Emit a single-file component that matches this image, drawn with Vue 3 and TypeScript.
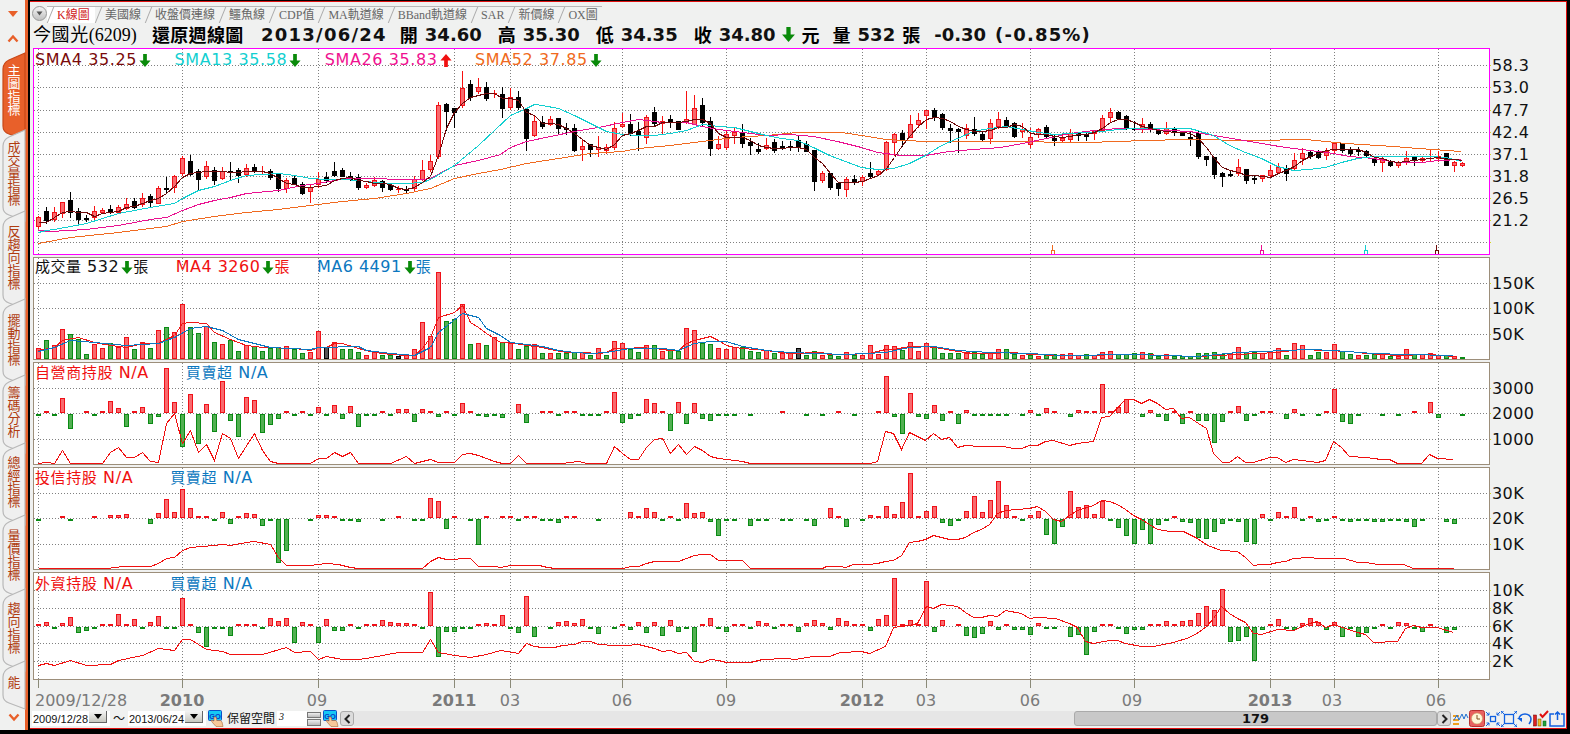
<script setup lang="ts">
type Bar = { x: number; y: number; c: string }

// y values below are page coordinates, each panel's viewBox starts at its own top
const gridX = [38, 182, 318, 454, 510, 622, 726, 862, 926, 1030, 1134, 1270, 1334, 1438]

const candles: number[][] = [
  [216,217,226,228,1],[207,211,220,223,0],[207,212,219,221,1],[202,202,213,217,1],[192,200,212,217,0],[208,211,219,225,0],[215,218,219,221,0],[206,211,217,219,1],
  [208,210,212,213,1],[205,209,212,213,0],[205,207,212,213,1],[198,204,208,209,1],[198,201,207,208,0],[193,198,204,206,1],[194,196,202,206,0],[186,188,203,203,1],
  [177,188,189,192,0],[175,176,187,192,1],[156,158,173,175,1],[155,161,174,175,0],[169,171,179,189,0],[161,166,176,178,1],[167,170,180,184,0],[167,171,178,179,1],
  [162,171,172,180,0],[168,170,175,182,0],[164,168,174,176,1],[164,167,171,172,0],[166,171,172,173,1],[169,171,177,179,0],[173,174,188,191,0],[178,180,188,192,1],
  [176,178,184,184,0],[182,184,193,194,0],[185,187,191,202,1],[172,179,184,187,1],[172,177,180,182,0],[162,171,175,176,0],[168,170,176,176,0],[172,176,179,180,0],
  [174,177,187,189,0],[183,185,187,188,1],[177,180,185,186,1],[180,181,187,191,0],[184,185,189,190,0],[186,189,190,192,1],[186,189,190,193,0],[176,179,188,190,1],
  [160,170,179,180,1],[155,161,169,171,1],[102,105,156,158,1],[103,104,111,130,0],[108,108,112,127,0],[71,88,105,107,1],[80,84,97,100,0],[78,87,91,93,1],
  [82,87,98,100,0],[90,93,94,97,1],[87,94,108,117,0],[88,97,107,109,1],[91,97,107,109,0],[109,109,138,150,0],[116,121,135,136,1],[116,122,126,128,0],
  [116,119,124,125,1],[118,118,128,133,0],[123,128,129,134,0],[124,128,150,151,0],[140,146,149,160,1],[144,144,149,156,0],[136,147,149,156,1],[144,147,150,153,1],
  [122,128,147,149,1],[113,124,126,127,1],[114,124,133,135,0],[122,131,135,150,0],[115,117,137,143,1],[107,112,123,125,0],[116,121,123,133,1],[115,119,122,127,0],
  [121,121,129,129,0],[91,119,121,123,1],[95,108,124,124,1],[98,105,122,125,0],[117,121,148,155,0],[136,144,148,149,1],[130,134,147,149,1],[128,132,135,143,1],
  [124,132,143,147,0],[138,142,145,154,0],[143,149,151,153,0],[138,145,148,149,1],[139,142,150,152,0],[141,146,148,149,0],[141,146,147,150,0],[135,140,147,151,0],
  [141,144,151,151,0],[150,150,181,190,0],[171,173,180,182,1],[173,173,187,189,0],[182,183,188,195,0],[177,179,189,196,1],[175,179,182,184,0],[175,177,181,185,1],
  [162,173,176,177,0],[170,171,174,175,1],[141,142,169,170,1],[133,134,142,155,1],[130,133,140,146,0],[115,124,137,137,1],[113,120,124,127,1],[110,110,115,128,1],
  [108,110,116,120,0],[113,114,127,129,0],[124,128,130,142,0],[128,129,131,152,0],[124,128,135,138,1],[117,129,133,135,0],[131,134,139,141,0],[119,123,138,143,1],
  [112,119,126,128,1],[117,120,125,126,0],[122,123,136,137,0],[123,129,131,137,1],[128,137,144,147,1],[128,129,134,137,1],[125,127,136,137,0],[134,138,140,145,0],
  [133,138,140,142,1],[129,133,139,142,1],[133,133,135,140,0],[132,134,136,140,0],[130,131,133,139,1],[115,118,130,131,1],[108,112,117,121,1],[111,112,118,118,0],
  [115,116,128,129,0],[121,128,129,130,0],[118,124,129,132,1],[122,124,129,131,0],[129,130,133,134,0],[122,128,133,134,1],[127,128,132,135,0],[131,132,135,135,0],
  [131,137,139,145,0],[131,133,156,158,0],[156,156,159,165,0],[157,157,174,178,0],[172,173,176,186,0],[171,174,175,176,0],[159,167,173,175,1],[169,169,180,183,0],
  [176,178,179,183,0],[175,175,178,181,1],[165,170,175,177,1],[163,167,172,173,1],[165,168,173,180,0],[153,160,168,170,1],[148,153,158,164,1],[150,152,156,158,0],
  [150,151,157,158,0],[148,151,155,159,1],[142,143,150,153,1],[143,143,150,152,0],[147,149,153,156,0],[147,150,151,155,0],[150,151,155,157,0],[157,158,162,165,0],
  [157,159,162,171,1],[160,161,165,166,0],[161,162,165,167,1],[151,158,162,164,1],[157,157,159,165,0],[157,158,160,161,1],[149,158,159,160,1],[151,156,158,161,1],
  [153,153,165,165,0],[161,162,165,171,1],[162,163,165,166,1],
]

const ma4 = `38,222 46,222 54,217 62,212 70,211 78,212 86,212 94,216 102,213 110,212 118,211 126,207 134,206 142,203 150,200 158,198 166,193 174,186 182,177 190,173 198,172 206,171 214,171 222,171 230,172 238,172 246,171 254,171 262,171 270,173 278,178 286,183 294,184 302,187 310,187 318,186 326,185 334,180 342,178 350,177 358,180 366,181 374,183 382,183 390,184 398,188 406,189 414,187 422,182 430,176 438,155 446,128 454,112 462,103 470,97 478,95 486,93 494,93 502,98 510,98 518,100 526,112 534,115 542,123 550,123 558,124 566,128 574,133 582,139 590,145 598,147 606,149 614,144 622,135 630,133 638,130 646,126 654,126 662,122 670,122 678,122 686,121 694,119 702,119 710,123 718,133 726,137 734,137 742,137 750,140 758,145 766,147 774,148 782,148 790,147 798,147 806,149 814,157 822,163 830,173 838,182 846,182 854,182 862,181 870,178 878,175 886,168 894,157 902,145 910,135 918,126 926,119 934,117 942,118 950,121 958,126 966,129 974,131 982,131 990,130 998,127 1006,127 1014,124 1022,126 1030,133 1038,134 1046,134 1054,136 1062,137 1070,136 1078,134 1086,134 1094,132 1102,128 1110,122 1118,119 1126,119 1134,122 1142,126 1150,128 1158,130 1166,131 1174,132 1182,132 1190,133 1198,138 1206,147 1214,158 1222,167 1230,170 1238,172 1246,175 1254,175 1262,176 1270,177 1278,173 1286,170 1294,166 1302,160 1310,156 1318,153 1326,150 1334,149 1342,149 1350,149 1358,149 1366,152 1374,157 1382,158 1390,161 1398,162 1406,161 1414,160 1422,159 1430,158 1438,157 1446,159 1454,159 1462,160`
const ma13 = `38,232 46,230 54,229 86,223 118,213 150,207 174,203 182,198 198,190 214,186 230,180 246,175 262,174 278,173 294,175 310,178 326,179 342,179 358,180 374,182 390,183 406,183 422,182 430,179 454,165 478,145 494,130 510,115 526,108 534,104 542,105 558,108 574,115 590,123 606,131 622,134 638,135 654,135 670,133 686,130 702,124 718,126 734,127 750,131 766,135 781,138 797,140 813,147 829,155 845,161 861,167 877,169 893,168 909,163 925,155 941,145 957,138 973,131 989,128 1006,126 1022,129 1038,132 1054,134 1070,133 1086,132 1102,131 1118,129 1134,128 1150,128 1173,128 1189,128 1197,130 1213,135 1229,145 1245,152 1261,158 1277,166 1293,170 1309,169 1325,167 1341,162 1357,158 1374,156 1405,156 1429,156 1446,157 1461,161`
const ma26 = `38,230 50,231 86,229 118,225 150,219 166,217 182,210 198,204 214,200 230,197 246,193 278,190 302,185 318,183 334,180 350,178 374,178 398,179 422,179 430,178 454,165 478,160 500,154 510,147 526,141 550,136 574,131 598,127 622,122 638,119 662,122 686,122 702,126 718,129 742,132 766,135 789,134 813,136 837,141 861,147 877,152 901,155 925,155 949,151 973,149 1000,147 1022,143 1046,138 1070,133 1094,130 1118,128 1150,129 1189,131 1213,135 1237,139 1261,143 1285,147 1309,150 1333,153 1349,156 1373,158 1397,162 1421,162 1438,160 1461,159`
const ma52 = `38,243 70,237 118,232 166,226 182,221 214,216 246,212 278,209 310,205 342,201 374,198 406,193 430,188 454,178 478,173 500,169 526,163 558,158 590,153 622,151 638,148 670,145 702,141 734,137 766,135 797,132 841,132 861,135 885,139 925,141 973,141 1000,141 1087,142 1145,140 1185,139 1255,140 1305,139 1345,143 1393,146 1418,148 1461,151`

const volRed = `38,350 54,347 62,340 78,337 94,342 110,345 126,347 142,343 158,343 166,339 174,335 182,323 190,322 206,323 214,332 230,339 246,345 262,347 294,348 310,350 318,347 326,347 334,343 342,343 358,348 374,352 390,354 406,355 414,355 422,348 430,337 438,317 454,312 462,305 470,322 478,327 486,333 494,338 500,342 510,342 526,345 542,347 550,349 566,352 582,352 598,353 606,352 614,348 630,348 638,347 654,348 670,350 678,350 686,343 694,340 702,338 710,336 718,340 726,345 734,347 742,348 766,350 789,353 821,352 829,354 845,354 869,353 885,349 893,349 909,346 925,346 941,348 957,351 973,353 989,353 1013,352 1029,354 1061,355 1093,355 1117,354 1141,354 1165,355 1197,356 1237,354 1277,352 1301,349 1325,350 1349,351 1365,353 1397,355 1429,354 1453,356`
const volBlue = `38,351 54,347 70,340 94,342 126,345 158,343 174,337 190,328 206,326 222,330 238,339 254,343 270,347 310,349 318,347 358,346 366,350 390,353 414,355 430,347 438,332 462,313 478,317 486,328 500,335 510,342 526,344 542,346 558,350 574,352 590,353 606,352 630,348 662,348 678,350 694,343 710,341 726,341 742,346 766,350 789,352 845,354 885,352 909,347 933,346 957,350 989,352 1029,353 1061,355 1133,354 1197,356 1237,352 1309,349 1333,350 1373,353 1405,354 1453,355`

const volBars = `38r348 46g340 54r345 62r329 70g334 78g339 86g354 94r344 102r348 110g343 118r347 126r337 134g349 142r342 150g348 158r330 166g327 174r332 182r304 190g327 198g333 206r326 214g342 222r344 230g340 238g351 246r345 254g346 262g351 270g348 278g347 286r346 294g349 302g353 310r352 318r331 326k347 334r342 342g349 350g349 358g352 366r355 374r352 382g355 390g355 398k356 406r355 414r349 422r322 430r336 438r272 446g321 454g319 462r304 470g344 478r343 486g345 494r337 502g342 510r343 518g349 526g346 534r344 542g353 550r353 558g353 566g353 574g352 582r352 590g355 598r348 606g355 614r341 622r343 630g349 638g352 646r345 654g345 662r351 670g350 678g351 686r328 694r330 702g343 710g344 718r348 726r349 734r347 742g347 750g351 758g352 766r350 774g353 782r353 790r353 798k348 806g355 814g351 822r355 830g355 838g356 846r352 854g355 862r355 870r345 878r354 886r345 894r346 902g350 910r342 918r351 926r343 934g346 942g353 950g353 958g353 966r353 974g352 982g354 990r353 998r349 1006g349 1014g354 1022r355 1030g355 1038r356 1046g355 1054g354 1062r354 1070r353 1078r355 1086g354 1094r355 1102r352 1110r351 1118g354 1126g354 1134g353 1142r352 1150g353 1158g356 1166r354 1174g356 1182g356 1190g356 1198g353 1206g353 1214g352 1222g354 1230r353 1238r347 1246g352 1254g352 1262r353 1270r352 1278r348 1286g355 1294r343 1302r345 1310g355 1318g352 1326r352 1334r344 1342g351 1350g354 1358r355 1366g355 1374g354 1382r354 1390g356 1398r356 1406r349 1414g354 1422r354 1430r353 1438r355 1446g355 1454r356 1462g357`

const dealerBars = `38:416 46:411 54:416 62:398 70:429 86:411 94:416 102:411 110:401 118:408 126:427 134:411 142:407 150:424 158:417 166:368 174:402 182:447 190:394 198:444 206:404 214:432 222:381 230:421 238:437 246:397 254:400 262:433 270:425 278:419 286:411 294:416 302:411 310:416 318:407 326:416 334:405 342:419 350:406 358:427 366:416 374:416 382:411 390:416 398:409 406:409 414:422 422:409 430:411 438:417 446:411 454:416 462:403 470:411 478:416 486:417 494:416 502:418 518:404 526:423 542:411 550:411 558:416 566:411 574:411 582:416 590:416 598:416 606:411 614:392 622:423 630:419 638:416 646:399 654:403 662:411 670:431 678:402 686:424 694:403 702:419 710:421 718:416 726:416 734:416 750:416 782:411 806:416 822:416 838:411 854:416 878:411 886:376 894:417 902:434 910:393 918:417 926:419 934:405 942:421 950:411 958:424 966:410 974:416 982:416 990:416 998:416 1006:416 1014:415 1022:416 1030:410 1038:416 1046:408 1054:411 1062:415 1070:417 1078:410 1086:411 1094:411 1102:384 1110:411 1118:407 1126:399 1134:415 1142:417 1150:410 1158:417 1166:421 1174:411 1182:424 1190:411 1198:421 1206:421 1214:443 1222:422 1230:411 1238:406 1246:421 1254:416 1262:411 1270:411 1286:419 1294:409 1302:416 1318:416 1326:411 1334:389 1342:422 1350:424 1358:416 1366:412 1374:415 1382:416 1390:415 1398:416 1414:411 1430:402 1438:418 1462:416`
const dealerLine = `38,463 46,462 54,463 62,450 70,463 102,463 110,452 118,447 126,457 134,457 142,452 150,461 158,462 166,423 174,413 182,443 190,430 198,452 206,444 214,460 222,433 230,438 238,458 254,433 262,450 270,461 278,463 310,463 318,458 326,458 334,452 342,456 350,452 358,463 390,463 406,456 414,463 430,459 438,462 454,462 462,454 470,453 478,455 494,461 502,463 510,463 518,455 526,463 562,463 570,462 578,461 587,463 606,463 614,446 622,453 630,459 638,459 646,447 654,439 662,438 670,453 678,444 686,454 694,446 702,450 710,456 718,458 726,459 742,461 750,463 870,463 877,461 885,431 893,433 901,449 909,432 925,440 933,433 941,439 949,437 957,447 965,445 979,446 1003,446 1013,448 1021,448 1029,445 1037,445 1045,441 1053,440 1069,445 1077,443 1093,441 1101,417 1109,416 1125,399 1133,399 1141,403 1149,399 1157,403 1165,409 1173,408 1181,418 1189,417 1198,423 1206,428 1213,453 1222,462 1229,462 1237,456 1245,462 1253,462 1269,457 1277,457 1285,462 1293,459 1317,462 1325,460 1333,441 1341,447 1349,456 1365,457 1381,459 1389,459 1397,463 1421,463 1429,454 1437,458 1453,459`

const trustBars = `38:521 62:516 70:521 94:516 110:515 118:515 126:514 150:524 158:513 166:499 174:512 182:489 190:508 198:516 206:516 214:521 222:512 230:524 238:516 246:513 254:514 262:526 270:521 278:563 286:551 310:521 318:515 326:515 334:516 342:521 350:521 358:522 366:520 382:521 390:520 398:516 414:521 422:521 430:498 438:501 446:529 454:516 470:521 478:545 486:516 502:516 510:516 518:521 526:516 534:516 542:521 550:521 558:523 566:516 574:516 598:521 630:512 638:516 646:508 654:512 662:521 670:516 678:521 686:503 694:513 702:512 710:522 718:536 726:521 734:521 750:526 758:521 766:521 782:521 790:521 806:521 814:526 830:508 838:516 846:527 862:521 870:515 878:516 886:506 894:514 902:502 910:473 918:516 926:511 934:506 942:523 950:526 958:521 966:511 974:496 982:512 990:500 998:481 1006:505 1014:516 1022:521 1030:515 1038:511 1046:535 1054:544 1062:527 1070:491 1078:507 1086:505 1094:514 1102:501 1110:521 1118:528 1126:536 1134:544 1142:530 1150:544 1158:525 1166:521 1174:516 1182:522 1190:523 1198:538 1206:539 1214:532 1222:524 1230:521 1238:522 1246:542 1254:544 1262:514 1270:521 1278:512 1286:516 1294:507 1302:521 1310:516 1318:522 1326:521 1334:516 1342:521 1350:522 1358:521 1366:521 1374:522 1382:522 1390:521 1398:521 1406:522 1414:527 1422:521 1446:522 1454:524`
const trustLine = `38,568 106,568 115,567 122,566 150,566 158,563 166,558 174,557 182,550 190,547 214,545 222,544 230,545 246,542 254,541 270,544 278,557 286,565 310,565 318,564 326,563 338,564 350,567 358,568 422,568 430,561 438,557 446,559 470,558 478,566 494,566 500,567 510,565 539,565 547,567 555,568 623,568 630,566 638,566 646,563 654,561 678,561 686,558 694,555 702,554 710,554 718,560 742,560 750,568 822,568 826,566 839,566 845,567 853,564 869,564 877,563 885,561 893,560 901,555 909,542 917,541 925,539 933,535 941,537 949,539 957,539 965,537 973,532 981,529 989,524 997,513 1005,510 1029,508 1037,506 1045,511 1053,519 1061,521 1069,515 1077,510 1093,505 1101,500 1109,501 1117,504 1125,509 1133,515 1141,519 1157,529 1170,531 1183,531 1197,538 1207,545 1221,550 1237,551 1245,557 1253,565 1261,564 1269,564 1277,562 1285,561 1293,558 1309,557 1317,558 1344,558 1357,562 1365,562 1378,564 1403,564 1413,568 1453,568`

const foreignBars = `38:624 46:622 54:629 62:623 70:617 78:633 86:631 94:629 102:624 110:624 118:614 126:624 134:619 142:629 150:622 158:616 166:629 174:629 182:598 190:624 198:633 206:647 214:629 222:629 230:636 238:624 246:624 254:624 262:629 270:618 278:621 286:618 294:643 302:622 310:624 318:643 326:619 334:631 342:631 350:624 358:629 366:624 374:624 382:620 390:622 398:623 406:623 414:624 422:629 430:592 438:657 446:632 454:632 462:629 470:629 478:624 486:623 494:624 502:615 510:629 518:633 526:596 534:637 542:628 550:629 558:622 566:621 574:623 582:619 590:629 598:634 606:628 614:629 622:624 630:630 638:622 646:633 654:622 662:636 670:620 678:632 686:629 694:652 702:624 710:618 718:629 726:632 734:624 742:624 750:629 758:621 766:623 774:629 782:624 790:624 798:632 806:623 814:620 822:623 830:630 838:618 846:621 854:624 862:624 870:631 878:619 886:615 894:578 902:624 910:620 918:624 926:581 934:632 942:620 950:628 958:624 966:636 974:638 982:634 990:621 998:630 1006:624 1014:630 1022:630 1030:635 1038:623 1046:629 1054:629 1062:628 1070:637 1078:635 1086:655 1094:632 1102:624 1110:624 1118:629 1126:634 1134:630 1142:630 1150:624 1158:624 1166:621 1174:624 1182:621 1190:620 1198:613 1206:606 1214:610 1222:589 1230:642 1238:641 1246:637 1254:661 1262:630 1270:624 1278:619 1286:629 1294:630 1302:623 1310:618 1318:622 1326:630 1334:622 1342:637 1350:629 1358:637 1366:633 1374:629 1382:624 1390:629 1398:622 1406:623 1414:629 1422:632 1430:624 1446:633 1454:630`
const foreignLine = `38,665 46,663 54,665 70,660 86,665 110,664 118,660 142,655 158,648 174,650 182,639 190,639 206,649 222,651 230,654 262,654 286,647 294,652 310,651 318,659 326,656 342,659 358,659 366,658 398,652 422,652 430,639 438,652 454,655 470,657 486,654 500,650 518,653 526,643 534,646 542,647 554,647 562,645 574,644 582,641 590,641 598,644 614,645 626,645 638,644 654,648 662,651 670,650 678,653 686,652 694,661 702,662 710,659 718,660 726,662 750,662 762,659 786,658 794,659 813,656 829,656 840,652 861,651 869,653 885,646 893,627 909,625 917,623 926,606 933,608 941,604 957,606 965,612 973,617 981,617 989,615 997,616 1005,610 1021,613 1029,618 1037,617 1055,618 1069,623 1077,627 1085,641 1093,643 1109,640 1117,640 1125,643 1141,646 1153,646 1173,642 1189,637 1198,632 1206,626 1213,618 1221,606 1229,613 1237,618 1245,622 1253,633 1261,634 1277,629 1293,630 1309,623 1317,621 1325,627 1333,624 1357,632 1365,634 1373,642 1397,641 1405,628 1413,625 1421,627 1437,627 1453,632`

function parseBars(src: string, base: number): Bar[] {
  return src.split(" ").map((t) => {
    const [x, y] = t.split(":").map(Number)
    return { x, y, c: y < base ? "r" : "g" }
  })
}

function parseVolume(src: string): Bar[] {
  return src.split(" ").map((t) => {
    const m = t.match(/(\d+)([rgk])(\d+)/)!
    return { x: Number(m[1]), y: Number(m[3]), c: m[2] }
  })
}

function barRect(b: Bar, base: number) {
  if (b.y < base) return { x: b.x - 1.5, y: b.y + 0.5, width: 4, height: base - b.y - 1 }
  return { x: b.x - 1.5, y: base + 1.5, width: 4, height: b.y - base - 2 }
}

const panels = [
  {
    key: "price", top: 48, height: 207, base: 0, frame: "#ff00ff",
    grid: [65, 87, 110, 132, 154, 176, 198, 220, 242],
    labels: [[65, "58.3"], [87, "53.0"], [110, "47.7"], [132, "42.4"], [154, "37.1"], [176, "31.8"], [198, "26.5"], [220, "21.2"]],
    bars: [] as Bar[],
    lines: [
      { color: "#f06a20", points: ma52 },
      { color: "#ea1090", points: ma26 },
      { color: "#12cfd0", points: ma13 },
      { color: "#6e0a0a", points: ma4 },
    ],
  },
  {
    key: "volume", top: 257, height: 103, base: 359, frame: "#9c8e7a",
    grid: [283, 308, 334],
    labels: [[283, "150K"], [308, "100K"], [334, "50K"]],
    bars: parseVolume(volBars),
    lines: [
      { color: "#f01818", points: volRed },
      { color: "#0c78c0", points: volBlue },
    ],
  },
  {
    key: "dealer", top: 362, height: 103, base: 413, frame: "#9c8e7a",
    grid: [388, 413, 439],
    labels: [[388, "3000"], [413, "2000"], [439, "1000"]],
    bars: parseBars(dealerBars, 413),
    lines: [{ color: "#f01010", points: dealerLine }],
  },
  {
    key: "trust", top: 467, height: 103, base: 518, frame: "#9c8e7a",
    grid: [493, 518, 544],
    labels: [[493, "30K"], [518, "20K"], [544, "10K"]],
    bars: parseBars(trustBars, 518),
    lines: [{ color: "#f01010", points: trustLine }],
  },
  {
    key: "foreign", top: 572, height: 108, base: 626, frame: "#9c8e7a",
    grid: [590, 608, 626, 643, 661],
    labels: [[590, "10K"], [608, "8K"], [626, "6K"], [643, "4K"], [661, "2K"]],
    bars: parseBars(foreignBars, 626),
    lines: [{ color: "#f01010", points: foreignLine }],
  },
]

const signals = [
  { x: 1052, color: "#f06a20" },
  { x: 1261, color: "#ea1090" },
  { x: 1365, color: "#12cfd0" },
  { x: 1436, color: "#6e0a0a" },
]

const dates = [
  { x: 182, t: "2010", bold: true }, { x: 317, t: "09" }, { x: 454, t: "2011", bold: true }, { x: 510, t: "03" },
  { x: 622, t: "06" }, { x: 726, t: "09" }, { x: 862, t: "2012", bold: true }, { x: 926, t: "03" },
  { x: 1030, t: "06" }, { x: 1132, t: "09" }, { x: 1270, t: "2013", bold: true }, { x: 1332, t: "03" }, { x: 1436, t: "06" },
]

const chartTabs = ["K線圖", "美國線", "收盤價連線", "鱷魚線", "CDP值", "MA軌道線", "BBand軌道線", "SAR", "新價線", "OX圖"]

const sideTabs = [
  { label: "主圖指標", h: 77, active: true },
  { label: "成交量指標", h: 81 },
  { label: "反趨向指標", h: 88 },
  { label: "擺動指標", h: 76 },
  { label: "籌碼分析", h: 68 },
  { label: "總經指標", h: 72 },
  { label: "量價指標", h: 74 },
  { label: "趨向指標", h: 72 },
  { label: "能", h: 38 },
]

function tabPath(h: number) {
  return `M25 0 L9 7 Q3 10 3 16 V${h - 4} Q3 ${h + 2} 9 ${h + 4} L25 ${h + 10} V0 Z`
}
</script>

<template>
  <div class="app">
    <svg class="defs" aria-hidden="true">
      <symbol id="arrow-down" viewBox="0 0 12 14"><path d="M4 0h4v7h4L6 14 0 7h4z" /></symbol>
      <symbol id="arrow-up" viewBox="0 0 12 14"><path d="M4 14h4V7h4L6 0 0 7h4z" /></symbol>
    </svg>

    <aside class="sidebar">
      <div class="side-arrows">
        <svg width="12" height="8" viewBox="0 0 12 8"><path d="M1 1h10L6 7z" fill="#e8602a" /></svg>
        <svg width="12" height="9" viewBox="0 0 12 9"><path d="M1.5 7.5 6 2.5l4.5 5" fill="none" stroke="#e8602a" stroke-width="2.4" /></svg>
      </div>
      <div class="side-tabs">
        <div v-for="tab in sideTabs" :key="tab.label" class="side-tab" :class="{ active: tab.active }" :style="{ height: tab.h + 'px' }">
          <svg class="side-tab-bg" width="25" :height="tab.h + 12" :viewBox="`0 0 25 ${tab.h + 12}`"><path :d="tabPath(tab.h)" /></svg>
          <span class="side-tab-text">{{ tab.label }}</span>
        </div>
      </div>
      <svg class="side-more" width="12" height="9" viewBox="0 0 12 9"><path d="M1.5 1.5 6 6.5l4.5-5" fill="none" stroke="#e8602a" stroke-width="2.4" /></svg>
    </aside>

    <main class="main">
      <nav class="tabs">
        <span class="round-btn">
          <svg width="7" height="5" viewBox="0 0 7 5"><path d="M0.5 0.5h6L3.5 4.5z" fill="#555" /></svg>
        </span>
        <span v-for="(t, i) in chartTabs" :key="t" class="tab" :class="{ current: i === 0 }">{{ t }}</span>
      </nav>

      <header class="title">
        <span class="name">今國光<span class="code">(6209)</span></span>
        <span class="kind">還原週線圖</span>
        <span class="num date">2013/06/24</span>
        <span class="pair"><b>開</b><span class="num">34.60</span></span>
        <span class="pair"><b>高</b><span class="num">35.30</span></span>
        <span class="pair"><b>低</b><span class="num">34.35</span></span>
        <span class="pair"><b>收</b><span class="num">34.80</span></span>
        <svg class="icon-arrow big down"><use href="#arrow-down" /></svg>
        <b class="unit">元</b>
        <span class="pair vol"><b>量</b><span class="num">532</span><b>張</b></span>
        <span class="num change">-0.30</span>
        <span class="num pct">(-0.85%)</span>
      </header>

      <div class="charts">
        <section v-for="p in panels" :key="p.key" class="panel" :style="{ height: p.height + 'px' }">
          <svg class="plot" width="1533" :height="p.height" :viewBox="`33 ${p.top} 1533 ${p.height}`">
            <rect x="33.5" :y="p.top + 0.5" width="1456" :height="p.height - 1" fill="#fff" />
            <g class="grid">
              <line v-for="y in p.grid" :key="y" x1="34" x2="1489" :y1="y + 0.5" :y2="y + 0.5" />
              <line v-for="x in gridX" :key="x" :x1="x + 0.5" :x2="x + 0.5" :y1="p.top + 1" :y2="p.top + p.height - 1" />
            </g>
            <g class="crisp">
              <rect v-for="y in p.grid" :key="y" x="1489" :y="y" width="2" height="1" fill="#d8d820" />
            </g>

            <g v-if="p.key === 'price'" class="crisp">
              <g v-for="(c, i) in candles" :key="i">
                <line :x1="38.5 + i * 8" :x2="38.5 + i * 8" :y1="c[0]" :y2="c[3] + 1" :stroke="c[4] ? '#f81010' : '#000'" />
                <rect v-if="c[4] && c[2] - c[1] > 1" class="bar-r" :x="36.5 + i * 8" :y="c[1] + 0.5" width="4" :height="c[2] - c[1]" />
                <rect v-else :x="36 + i * 8" :y="c[1]" width="5" :height="Math.max(c[2] - c[1], 1) + (c[4] ? 0 : 1)" :fill="c[4] ? '#f81010' : '#000'" />
              </g>
            </g>

            <g v-else class="crisp">
              <rect v-for="b in p.bars" :key="b.x" v-bind="barRect(b, p.base)" :class="'bar-' + b.c" />
            </g>

            <polyline v-for="l in p.lines" :key="l.color" class="series" :points="l.points" :stroke="l.color" transform="translate(0.5 0.5)" />

            <g v-if="p.key === 'price'" class="crisp">
              <path v-for="s in signals" :key="s.x" :d="`M${s.x + 0.5} 245V250M${s.x - 1} 254V250.5H${s.x + 2}V254`" fill="none" :stroke="s.color" />
            </g>

            <rect class="frame" x="33.5" :y="p.top + 0.5" width="1456" :height="p.height - 1" :stroke="p.frame" />
            <text v-for="a in p.labels" :key="a[1]" x="1492" :y="Number(a[0]) + 6" class="axis-label">{{ a[1] }}</text>
          </svg>

          <div v-if="p.key === 'price'" class="legend sma">
            <span class="c-maroon">SMA4 35.25<svg class="icon-arrow down"><use href="#arrow-down" /></svg></span>
            <span class="c-cyan">SMA13 35.58<svg class="icon-arrow down"><use href="#arrow-down" /></svg></span>
            <span class="c-pink">SMA26 35.83<svg class="icon-arrow up"><use href="#arrow-up" /></svg></span>
            <span class="c-orange">SMA52 37.85<svg class="icon-arrow down"><use href="#arrow-down" /></svg></span>
          </div>
          <div v-else-if="p.key === 'volume'" class="legend vols">
            <span class="c-black"><i>成交量</i> 532<svg class="icon-arrow down"><use href="#arrow-down" /></svg><i>張</i></span>
            <span class="c-red">MA4 3260<svg class="icon-arrow down"><use href="#arrow-down" /></svg><i>張</i></span>
            <span class="c-blue">MA6 4491<svg class="icon-arrow down"><use href="#arrow-down" /></svg><i>張</i></span>
          </div>
          <div v-else class="legend chips" :class="p.key">
            <span class="c-red"><i>{{ p.key === 'dealer' ? '自營商持股' : p.key === 'trust' ? '投信持股' : '外資持股' }}</i> N/A</span>
            <span class="c-blue"><i>買賣超</i> N/A</span>
          </div>
        </section>
      </div>

      <svg class="dates" width="1533" height="30" viewBox="33 680 1533 30">
        <g class="crisp">
          <line v-for="x in gridX" :key="x" :x1="x + 0.5" :x2="x + 0.5" y1="680" y2="688" stroke="#8a8a78" />
        </g>
        <text x="35" y="706" class="date-label">2009/12/28</text>
        <text v-for="d in dates" :key="d.x" :x="d.x" y="706" text-anchor="middle" class="date-label" :class="{ bold: d.bold }">{{ d.t }}</text>
      </svg>

      <footer class="toolbar">
        <span class="field first">2009/12/28<span class="drop"><svg width="8" height="5" viewBox="0 0 8 5"><path d="M0 0h8L4 5z" /></svg></span></span>
        <span class="tilde">～</span>
        <span class="field">2013/06/24<span class="drop"><svg width="8" height="5" viewBox="0 0 8 5"><path d="M0 0h8L4 5z" /></svg></span></span>
        <svg class="go" width="16" height="17" viewBox="0 0 16 17">
          <rect x="0.5" y="0.5" width="13" height="10" rx="1" fill="#15c8f5" stroke="#0a50c8" />
          <text x="7" y="8.5" text-anchor="middle" class="go-text">GO</text>
          <path d="M6 7h2l1 4 1-1 1 1 1-1 2 2 1 4.500H8l-4-4.500-1-2 3 1z" fill="#f6c79a" stroke="#a86a3a" stroke-width="0.6" />
        </svg>
        <span class="keep">保留空間</span>
        <span class="keep-val">3</span>
        <span class="spin"><i></i><i></i></span>
        <svg class="go" width="16" height="17" viewBox="0 0 16 17">
          <rect x="0.5" y="0.5" width="13" height="10" rx="1" fill="#15c8f5" stroke="#0a50c8" />
          <text x="7" y="8.5" text-anchor="middle" class="go-text">GO</text>
          <path d="M6 7h2l1 4 1-1 1 1 1-1 2 2 1 4.500H8l-4-4.500-1-2 3 1z" fill="#f6c79a" stroke="#a86a3a" stroke-width="0.6" />
        </svg>
        <span class="nav-btn prev"><svg width="7" height="10" viewBox="0 0 7 10"><path d="M5.5 1 1.5 5l4 4" fill="none" stroke="#222" stroke-width="2" /></svg></span>
        <span class="track"><span class="thumb">179</span></span>
        <span class="nav-btn"><svg width="7" height="10" viewBox="0 0 7 10"><path d="M1.5 1 5.5 5l-4 4" fill="none" stroke="#222" stroke-width="2" /></svg></span>
        <span class="tools">
          <svg width="16" height="16" viewBox="0 0 16 16">
            <path d="M0 5h6M0 9h6M0 13h6" stroke="#f0a020" stroke-width="2" />
            <path d="M1 9 4 4l2 5 3-6 2 5 2-5 2 4" fill="none" stroke="#2070d0" />
          </svg>
          <svg class="clock" width="16" height="17" viewBox="0 0 16 17">
            <rect x="0.5" y="0.5" width="15" height="16" rx="2" fill="#e86060" stroke="#b83030" />
            <circle cx="8" cy="8.5" r="5.5" fill="#fff6d8" stroke="#c8a060" stroke-width="0.6" />
            <path d="M8 5v4h3" fill="none" stroke="#805020" />
          </svg>
          <svg width="16" height="16" viewBox="0 0 16 16">
            <rect x="5.5" y="5.5" width="5" height="5" fill="none" stroke="#1060e0" stroke-width="1.3" />
            <path d="M1 1l3 3M15 1l-3 3M1 15l3-3M15 15l-3-3M4 1.5V4H1.5M12 1.5V4h2.5M4 14.5V12H1.5M12 14.5V12h2.5" fill="none" stroke="#1060e0" />
          </svg>
          <svg width="16" height="16" viewBox="0 0 16 16">
            <rect x="3.5" y="3.5" width="9" height="9" fill="none" stroke="#1060e0" stroke-width="1.3" />
            <path d="M0 0l3 3M16 0l-3 3M0 16l3-3M16 16l-3-3M0 3V0h3M13 0h3v3M0 13v3h3M16 13v3h-3" fill="none" stroke="#1060e0" />
          </svg>
          <svg width="16" height="16" viewBox="0 0 16 16">
            <path d="M2 8a6 5 0 0 1 12 0c0 3-1 4-2 5" fill="none" stroke="#1060e0" stroke-width="1.6" />
            <path d="M0 7h5v4z" fill="#1060e0" />
          </svg>
          <svg width="16" height="17" viewBox="0 0 16 17">
            <rect x="0.5" y="5" width="3" height="11" fill="#e02020" stroke="#600" stroke-width="0.5" />
            <rect x="5" y="9" width="3" height="7" fill="#f0c020" stroke="#640" stroke-width="0.5" />
            <rect x="10" y="11" width="3" height="5" fill="#20a040" stroke="#060" stroke-width="0.5" />
            <path d="M7 4l2.500 3L15 1" fill="none" stroke="#e01010" stroke-width="2" />
          </svg>
          <svg width="16" height="16" viewBox="0 0 16 16">
            <path d="M5 3H1v12h14V3h-3" fill="none" stroke="#1060e0" stroke-width="1.5" />
            <path d="M8.500 9V1M6 3.500 8.500 1 11 3.500" fill="none" stroke="#1060e0" stroke-width="1.5" />
          </svg>
        </span>
      </footer>
    </main>
  </div>
</template>

<style>
html, body {
  margin: 0;
  background: #000;
  overflow: hidden;
}
</style>

<style scoped>
.app {
  display: flex;
  width: 1570px;
  height: 734px;
  background: #000;
  overflow: hidden;
  font-family: "Liberation Serif", "Noto Sans CJK TC", serif;
}

.defs {
  position: absolute;
  width: 0;
  height: 0;
}

.go-text {
  font: bold 7.5px "Liberation Sans", sans-serif;
  fill: #0838c8;
}

/* left rail */
.sidebar {
  flex: none;
  position: relative;
  display: flex;
  flex-direction: column;
  align-items: center;
  width: 25px;
  height: 730px;
  background: #f0f1f0;
  border-right: 3px solid #e8602a;
  margin-right: 2px;
}

.side-arrows {
  display: flex;
  flex-direction: column;
  align-items: center;
  gap: 16px;
  height: 53px;
  padding-top: 10px;
  box-sizing: border-box;
}

.side-tabs {
  display: flex;
  flex-direction: column;
  width: 25px;
}

.side-tab {
  position: relative;
  flex: none;
  display: flex;
  justify-content: center;
  align-items: center;
}

.side-tab-bg {
  position: absolute;
  top: 0;
  left: 0;
  overflow: visible;
}

.side-tab-bg path {
  fill: #efefef;
  stroke: #b8b8b8;
  stroke-width: 1.2;
}

.side-tab.active .side-tab-bg path {
  fill: #e8602a;
  stroke: #c84818;
}

.side-tab-text {
  position: relative;
  writing-mode: vertical-rl;
  font: 13px/13px "Noto Sans CJK TC", sans-serif;
  color: #b03c10;
  margin-left: 3px;
  padding-top: 5px;
}

.side-tab.active .side-tab-text {
  color: #fff;
  padding-top: 0;
  margin-bottom: 4px;
}

.side-more {
  position: absolute;
  left: 8px;
  top: 713px;
}

/* content */
.main {
  flex: none;
  display: flex;
  flex-direction: column;
  width: 1536px;
  height: 726px;
  border-top: 1px solid #e01010;
  border-right: 1px solid #e01010;
  border-bottom: 1px solid #e01010;
  margin-top: 1px;
  background: #f0f1f0;
  box-sizing: content-box;
}

.tabs {
  display: flex;
  align-items: flex-end;
  height: 21px;
  padding-left: 2px;
  flex: none;
}

.round-btn {
  display: flex;
  justify-content: center;
  align-items: center;
  flex: none;
  width: 13px;
  height: 13px;
  margin-bottom: 2px;
  border: 1px solid #999;
  border-radius: 50%;
  background: linear-gradient(#f4f4f4, #c0c0c0);
}

.tab {
  position: relative;
  flex: none;
  height: 16px;
  padding: 0 4px 0 10px;
  border-top: 1px solid #b8b8b8;
  font: 12px/16px "Liberation Serif", "Noto Sans CJK TC", serif;
  color: #666;
}

.tab::before {
  content: "";
  position: absolute;
  left: 3px;
  top: 0;
  bottom: 0;
  border-left: 1px solid #aaa;
  transform: skewX(-22deg);
}

.tab.current {
  color: #d02020;
  background: #fff;
  width: 34px;
}

.title {
  flex: none;
  display: flex;
  align-items: center;
  height: 25px;
  padding: 0 0 2px 3px;
  box-sizing: border-box;
  font: 18px/23px "Noto Sans CJK TC", sans-serif;
  color: #000;
}

.name {
  width: 119px;
  letter-spacing: 0.6px;
}

.code {
  font-family: "Liberation Serif", serif;
  letter-spacing: 0;
}

.kind {
  width: 109px;
  font-weight: 700;
  letter-spacing: 0.3px;
}

.num {
  font: 700 18px/23px "DejaVu Sans", sans-serif;
  color: #111;
}

.date {
  letter-spacing: 1.25px;
  margin-right: 13px;
}

.pair {
  display: flex;
  gap: 7px;
  margin-right: 16px;
}

.icon-arrow {
  display: inline-block;
  width: 12px;
  height: 13px;
  vertical-align: -2px;
  margin-left: 2px;
}

.icon-arrow.down {
  fill: #0a8a0a;
}

.icon-arrow.up {
  fill: #f01010;
}

.icon-arrow.big {
  width: 13px;
  height: 15px;
  margin: 0 7px 0 -10px;
}

.unit {
  margin-right: 13px;
}

.pair.vol {
  gap: 7px;
  margin-right: 14px;
}

.change {
  margin-right: 9px;
}

.pct {
  letter-spacing: 1.2px;
}

/* charts */
.charts {
  flex: none;
  display: flex;
  flex-direction: column;
  gap: 2px;
  padding-left: 3px;
}

.panel {
  position: relative;
  flex: none;
}

.plot {
  display: block;
}

.grid line {
  stroke: #808080;
  stroke-dasharray: 1 2;
  shape-rendering: crispEdges;
}

.crisp {
  shape-rendering: crispEdges;
}

.series {
  fill: none;
  stroke-width: 1;
  shape-rendering: crispEdges;
}

.bar-r {
  fill: #f86a6e;
  stroke: #f01018;
}

.bar-g {
  fill: #52b052;
  stroke: #0a8a14;
}

.bar-k {
  fill: #555;
  stroke: #000;
}

.frame {
  fill: none;
  shape-rendering: crispEdges;
}

.axis-label {
  font: 16px "DejaVu Sans", sans-serif;
  letter-spacing: 0.4px;
  fill: #111;
}

.legend {
  position: absolute;
  left: 2px;
  display: flex;
  font: 16px/18px "DejaVu Sans", "Noto Sans CJK TC", sans-serif;
  white-space: pre;
}

.legend i {
  font-style: normal;
  font-size: 15px;
}

.legend.sma {
  top: 3px;
  gap: 23.5px;
  letter-spacing: 0.6px;
}

.legend.vols {
  top: 1px;
  gap: 27px;
  letter-spacing: 0.5px;
}

.legend.chips {
  top: 2px;
  gap: 37px;
  letter-spacing: 0.6px;
}

.legend.chips.foreign {
  top: 3px;
}

.c-maroon { color: #7a0a0a; }
.c-cyan { color: #12cfd0; }
.c-pink { color: #f01090; }
.c-orange { color: #f06a20; }
.c-black { color: #111; }
.c-red { color: #f01010; }
.c-blue { color: #0c78c0; }

.dates {
  flex: none;
  display: block;
  margin-left: 3px;
}

.date-label {
  font: 16px "DejaVu Sans", sans-serif;
  fill: #7a7a7a;
}

.date-label.bold {
  font-weight: 700;
}

/* bottom toolbar */
.toolbar {
  flex: none;
  display: flex;
  align-items: center;
  height: 17px;
  padding-left: 2px;
  font: 12px/16px "Liberation Sans", "Noto Sans CJK TC", sans-serif;
  color: #111;
}

.field {
  position: relative;
  flex: none;
  width: 78px;
  height: 15px;
  padding-left: 1px;
  box-sizing: border-box;
  background: #fff;
  white-space: nowrap;
  font-size: 11px;
}

.drop {
  position: absolute;
  top: 0;
  right: 3px;
  display: flex;
  justify-content: center;
  align-items: center;
  width: 17px;
  height: 11px;
  background: linear-gradient(#f4f4f4, #c8c8c0);
  border-right: 1px solid #666;
  border-bottom: 1px solid #666;
}

.tilde {
  width: 18px;
  text-align: center;
}

.go {
  flex: none;
  margin-left: 2px;
}

.keep {
  width: 53px;
  padding-left: 3px;
  white-space: nowrap;
  box-sizing: border-box;
}

.keep-val {
  flex: none;
  width: 30px;
  height: 15px;
  padding-left: 2px;
  box-sizing: border-box;
  background: #fff;
  font: italic 10px/11px "Liberation Serif", serif;
}

.spin {
  flex: none;
  display: flex;
  flex-direction: column;
  gap: 1px;
  width: 14px;
  height: 14px;
}

.spin i {
  flex: 1;
  background: linear-gradient(#eee, #bbb);
  border: 1px solid #777;
}

.nav-btn {
  flex: none;
  display: flex;
  justify-content: center;
  align-items: center;
  width: 14px;
  height: 15px;
  background: #dcdcdc;
  border: 1px solid #aaa;
  border-radius: 3px;
  box-sizing: border-box;
}

.nav-btn.prev {
  margin-left: 1px;
}

.track {
  flex: none;
  display: flex;
  justify-content: flex-end;
  width: 1083px;
  height: 15px;
  background: #e6e6e6;
}

.thumb {
  width: 363px;
  background: #c8c8c8;
  border: 1px solid #aaa;
  border-radius: 3px;
  box-sizing: border-box;
  text-align: center;
  font: 700 13px/13px "DejaVu Sans", sans-serif;
  color: #111;
}

.tools {
  display: flex;
  align-items: center;
  flex: none;
  margin-left: 2px;
}
</style>
